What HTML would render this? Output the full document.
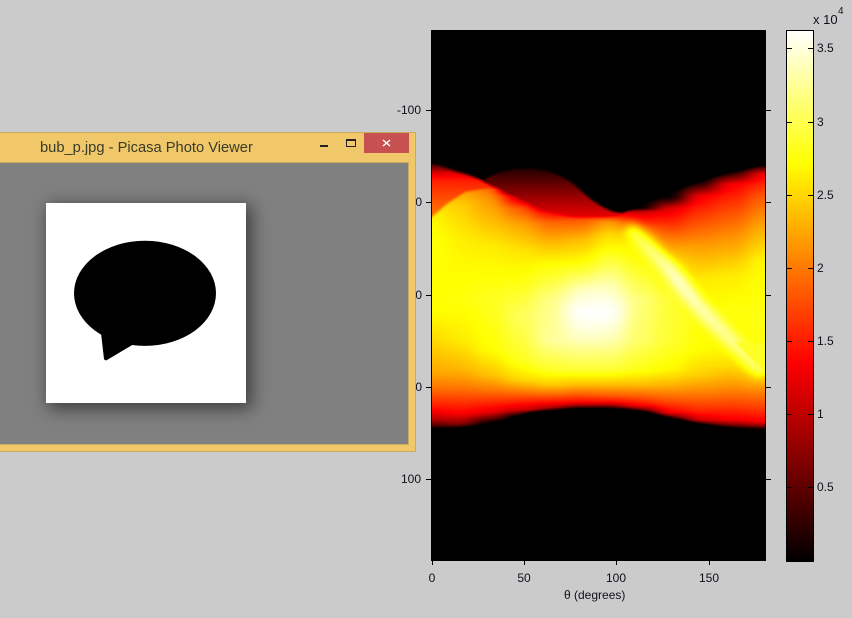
<!DOCTYPE html>
<html><head><meta charset="utf-8">
<style>
html,body{margin:0;padding:0;background:#cbcbcb;width:852px;height:618px;overflow:hidden}
body{position:relative;font-family:"Liberation Sans",sans-serif;font-size:12px;color:#10101c}
.t{position:absolute;line-height:14px;white-space:nowrap}
.r{text-align:right;width:50px}
.c{text-align:center;width:60px}
.win{position:absolute;left:-4px;top:132px;width:419px;height:318px;background:#f0c869;border:1px solid #c9ab5e;border-left:none;box-sizing:content-box}
.client{position:absolute;left:0;top:29px;width:412px;height:281px;background:#808080;border:1px solid #c9ab5e;border-left:none;overflow:hidden}
.photo{position:absolute;left:50px;top:40px;width:200px;height:200px;background:#fff;box-shadow:4px 4px 16px 2px rgba(0,0,0,.5)}
.title{position:absolute;left:44px;top:5px;font-size:14.7px;line-height:20px;color:#3a3a2a;white-space:nowrap}
.close{position:absolute;left:368px;top:0;width:45px;height:20px;background:#c75050}
</style></head><body>
<svg width="852" height="618" viewBox="0 0 852 618" style="position:absolute;left:0;top:0">
<defs>
<clipPath id="p"><rect x="432" y="30" width="333" height="531"/></clipPath>
<filter id="hotmap" filterUnits="userSpaceOnUse" x="415" y="20" width="370" height="550" color-interpolation-filters="sRGB">
  <feComponentTransfer>
    <feFuncR type="table" tableValues="0 .333 .667 1 1 1 1 1 1"/>
    <feFuncG type="table" tableValues="0 0 0 0 .333 .667 1 1 1"/>
    <feFuncB type="table" tableValues="0 0 0 0 0 0 0 .5 1"/>
  </feComponentTransfer>
</filter>
<filter id="hb" filterUnits="userSpaceOnUse" x="380" y="20" width="440" height="550" color-interpolation-filters="sRGB"><feGaussianBlur stdDeviation="9 0"/></filter>
<filter id="b1" filterUnits="userSpaceOnUse" x="380" y="10" width="440" height="570" color-interpolation-filters="sRGB"><feGaussianBlur stdDeviation="1"/></filter>
<filter id="b3" filterUnits="userSpaceOnUse" x="380" y="100" width="440" height="380" color-interpolation-filters="sRGB"><feGaussianBlur stdDeviation="5"/></filter>
<filter id="b12" filterUnits="userSpaceOnUse" x="380" y="100" width="440" height="380" color-interpolation-filters="sRGB"><feGaussianBlur stdDeviation="12"/></filter>

<linearGradient id="c432" gradientUnits="userSpaceOnUse" x1="0" y1="0" x2="0" y2="1000"><stop offset=".160" stop-color="rgb(0%,0%,0%)"/><stop offset=".165" stop-color="rgb(15%,15%,15%)"/><stop offset=".172" stop-color="rgb(35%,35%,35%)"/><stop offset=".180" stop-color="rgb(42%,42%,42%)"/><stop offset=".195" stop-color="rgb(60%,60%,60%)"/><stop offset=".205" stop-color="rgb(70%,70%,70%)"/><stop offset=".218" stop-color="rgb(74%,74%,74%)"/><stop offset=".240" stop-color="rgb(76%,76%,76%)"/><stop offset=".313" stop-color="rgb(75%,75%,75%)"/><stop offset=".347" stop-color="rgb(68%,68%,68%)"/><stop offset=".373" stop-color="rgb(62%,62%,62%)"/><stop offset=".387" stop-color="rgb(55%,55%,55%)"/><stop offset=".400" stop-color="rgb(46%,46%,46%)"/><stop offset=".410" stop-color="rgb(38%,38%,38%)"/><stop offset=".420" stop-color="rgb(25%,25%,25%)"/><stop offset=".430" stop-color="rgb(0%,0%,0%)"/></linearGradient>

<linearGradient id="c460" gradientUnits="userSpaceOnUse" x1="0" y1="0" x2="0" y2="1000"><stop offset=".168" stop-color="rgb(0%,0%,0%)"/><stop offset=".172" stop-color="rgb(10%,10%,10%)"/><stop offset=".178" stop-color="rgb(30%,30%,30%)"/><stop offset=".185" stop-color="rgb(45%,45%,45%)"/><stop offset=".192" stop-color="rgb(62%,62%,62%)"/><stop offset=".205" stop-color="rgb(68%,68%,68%)"/><stop offset=".240" stop-color="rgb(73%,73%,73%)"/><stop offset=".300" stop-color="rgb(76%,76%,76%)"/><stop offset=".340" stop-color="rgb(72%,72%,72%)"/><stop offset=".370" stop-color="rgb(64%,64%,64%)"/><stop offset=".388" stop-color="rgb(55%,55%,55%)"/><stop offset=".402" stop-color="rgb(45%,45%,45%)"/><stop offset=".414" stop-color="rgb(37%,37%,37%)"/><stop offset=".424" stop-color="rgb(20%,20%,20%)"/><stop offset=".430" stop-color="rgb(0%,0%,0%)"/></linearGradient>

<linearGradient id="c490" gradientUnits="userSpaceOnUse" x1="0" y1="0" x2="0" y2="1000"><stop offset=".180" stop-color="rgb(0%,0%,0%)"/><stop offset=".185" stop-color="rgb(40%,40%,40%)"/><stop offset=".190" stop-color="rgb(55%,55%,55%)"/><stop offset=".200" stop-color="rgb(60%,60%,60%)"/><stop offset=".220" stop-color="rgb(65%,65%,65%)"/><stop offset=".245" stop-color="rgb(72%,72%,72%)"/><stop offset=".300" stop-color="rgb(78%,78%,78%)"/><stop offset=".350" stop-color="rgb(75%,75%,75%)"/><stop offset=".375" stop-color="rgb(66%,66%,66%)"/><stop offset=".390" stop-color="rgb(55%,55%,55%)"/><stop offset=".403" stop-color="rgb(43%,43%,43%)"/><stop offset=".413" stop-color="rgb(33%,33%,33%)"/><stop offset=".420" stop-color="rgb(10%,10%,10%)"/><stop offset=".424" stop-color="rgb(0%,0%,0%)"/></linearGradient>

<linearGradient id="c520" gradientUnits="userSpaceOnUse" x1="0" y1="0" x2="0" y2="1000"><stop offset=".192" stop-color="rgb(0%,0%,0%)"/><stop offset=".196" stop-color="rgb(28%,28%,28%)"/><stop offset=".202" stop-color="rgb(38%,38%,38%)"/><stop offset=".208" stop-color="rgb(50%,50%,50%)"/><stop offset=".225" stop-color="rgb(62%,62%,62%)"/><stop offset=".250" stop-color="rgb(71%,71%,71%)"/><stop offset=".280" stop-color="rgb(76%,76%,76%)"/><stop offset=".315" stop-color="rgb(84%,84%,84%)"/><stop offset=".360" stop-color="rgb(78%,78%,78%)"/><stop offset=".380" stop-color="rgb(69%,69%,69%)"/><stop offset=".392" stop-color="rgb(55%,55%,55%)"/><stop offset=".402" stop-color="rgb(42%,42%,42%)"/><stop offset=".410" stop-color="rgb(30%,30%,30%)"/><stop offset=".416" stop-color="rgb(0%,0%,0%)"/></linearGradient>

<linearGradient id="c550" gradientUnits="userSpaceOnUse" x1="0" y1="0" x2="0" y2="1000"><stop offset=".200" stop-color="rgb(0%,0%,0%)"/><stop offset=".205" stop-color="rgb(15%,15%,15%)"/><stop offset=".213" stop-color="rgb(38%,38%,38%)"/><stop offset=".222" stop-color="rgb(52%,52%,52%)"/><stop offset=".245" stop-color="rgb(66%,66%,66%)"/><stop offset=".262" stop-color="rgb(74%,74%,74%)"/><stop offset=".300" stop-color="rgb(88%,88%,88%)"/><stop offset=".340" stop-color="rgb(90%,90%,90%)"/><stop offset=".370" stop-color="rgb(79%,79%,79%)"/><stop offset=".385" stop-color="rgb(67%,67%,67%)"/><stop offset=".395" stop-color="rgb(52%,52%,52%)"/><stop offset=".403" stop-color="rgb(38%,38%,38%)"/><stop offset=".410" stop-color="rgb(20%,20%,20%)"/><stop offset=".412" stop-color="rgb(0%,0%,0%)"/></linearGradient>

<linearGradient id="c580" gradientUnits="userSpaceOnUse" x1="0" y1="0" x2="0" y2="1000"><stop offset=".208" stop-color="rgb(0%,0%,0%)"/><stop offset=".214" stop-color="rgb(36%,36%,36%)"/><stop offset=".220" stop-color="rgb(50%,50%,50%)"/><stop offset=".240" stop-color="rgb(65%,65%,65%)"/><stop offset=".262" stop-color="rgb(75%,75%,75%)"/><stop offset=".290" stop-color="rgb(92%,92%,92%)"/><stop offset=".312" stop-color="rgb(100%,100%,100%)"/><stop offset=".340" stop-color="rgb(93%,93%,93%)"/><stop offset=".370" stop-color="rgb(80%,80%,80%)"/><stop offset=".385" stop-color="rgb(65%,65%,65%)"/><stop offset=".395" stop-color="rgb(50%,50%,50%)"/><stop offset=".402" stop-color="rgb(38%,38%,38%)"/><stop offset=".408" stop-color="rgb(10%,10%,10%)"/><stop offset=".409" stop-color="rgb(0%,0%,0%)"/></linearGradient>

<linearGradient id="c610" gradientUnits="userSpaceOnUse" x1="0" y1="0" x2="0" y2="1000"><stop offset=".208" stop-color="rgb(0%,0%,0%)"/><stop offset=".214" stop-color="rgb(38%,38%,38%)"/><stop offset=".222" stop-color="rgb(60%,60%,60%)"/><stop offset=".235" stop-color="rgb(70%,70%,70%)"/><stop offset=".250" stop-color="rgb(76%,76%,76%)"/><stop offset=".280" stop-color="rgb(90%,90%,90%)"/><stop offset=".312" stop-color="rgb(100%,100%,100%)"/><stop offset=".340" stop-color="rgb(92%,92%,92%)"/><stop offset=".370" stop-color="rgb(80%,80%,80%)"/><stop offset=".385" stop-color="rgb(65%,65%,65%)"/><stop offset=".396" stop-color="rgb(50%,50%,50%)"/><stop offset=".402" stop-color="rgb(38%,38%,38%)"/><stop offset=".408" stop-color="rgb(10%,10%,10%)"/><stop offset=".410" stop-color="rgb(0%,0%,0%)"/></linearGradient>

<linearGradient id="c640" gradientUnits="userSpaceOnUse" x1="0" y1="0" x2="0" y2="1000"><stop offset=".208" stop-color="rgb(0%,0%,0%)"/><stop offset=".212" stop-color="rgb(30%,30%,30%)"/><stop offset=".222" stop-color="rgb(44%,44%,44%)"/><stop offset=".232" stop-color="rgb(60%,60%,60%)"/><stop offset=".245" stop-color="rgb(72%,72%,72%)"/><stop offset=".265" stop-color="rgb(77%,77%,77%)"/><stop offset=".300" stop-color="rgb(87%,87%,87%)"/><stop offset=".340" stop-color="rgb(85%,85%,85%)"/><stop offset=".370" stop-color="rgb(77%,77%,77%)"/><stop offset=".385" stop-color="rgb(65%,65%,65%)"/><stop offset=".397" stop-color="rgb(50%,50%,50%)"/><stop offset=".405" stop-color="rgb(38%,38%,38%)"/><stop offset=".411" stop-color="rgb(10%,10%,10%)"/><stop offset=".413" stop-color="rgb(0%,0%,0%)"/></linearGradient>

<linearGradient id="c670" gradientUnits="userSpaceOnUse" x1="0" y1="0" x2="0" y2="1000"><stop offset=".197" stop-color="rgb(0%,0%,0%)"/><stop offset=".201" stop-color="rgb(10%,10%,10%)"/><stop offset=".208" stop-color="rgb(33%,33%,33%)"/><stop offset=".225" stop-color="rgb(45%,45%,45%)"/><stop offset=".245" stop-color="rgb(60%,60%,60%)"/><stop offset=".265" stop-color="rgb(72%,72%,72%)"/><stop offset=".285" stop-color="rgb(77%,77%,77%)"/><stop offset=".300" stop-color="rgb(80%,80%,80%)"/><stop offset=".340" stop-color="rgb(80%,80%,80%)"/><stop offset=".370" stop-color="rgb(74%,74%,74%)"/><stop offset=".385" stop-color="rgb(64%,64%,64%)"/><stop offset=".400" stop-color="rgb(50%,50%,50%)"/><stop offset=".412" stop-color="rgb(37%,37%,37%)"/><stop offset=".418" stop-color="rgb(10%,10%,10%)"/><stop offset=".420" stop-color="rgb(0%,0%,0%)"/></linearGradient>

<linearGradient id="c700" gradientUnits="userSpaceOnUse" x1="0" y1="0" x2="0" y2="1000"><stop offset=".181" stop-color="rgb(0%,0%,0%)"/><stop offset=".186" stop-color="rgb(10%,10%,10%)"/><stop offset=".196" stop-color="rgb(36%,36%,36%)"/><stop offset=".215" stop-color="rgb(46%,46%,46%)"/><stop offset=".245" stop-color="rgb(60%,60%,60%)"/><stop offset=".280" stop-color="rgb(72%,72%,72%)"/><stop offset=".320" stop-color="rgb(76%,76%,76%)"/><stop offset=".350" stop-color="rgb(75%,75%,75%)"/><stop offset=".375" stop-color="rgb(68%,68%,68%)"/><stop offset=".395" stop-color="rgb(55%,55%,55%)"/><stop offset=".412" stop-color="rgb(42%,42%,42%)"/><stop offset=".420" stop-color="rgb(30%,30%,30%)"/><stop offset=".425" stop-color="rgb(5%,5%,5%)"/><stop offset=".427" stop-color="rgb(0%,0%,0%)"/></linearGradient>

<linearGradient id="c730" gradientUnits="userSpaceOnUse" x1="0" y1="0" x2="0" y2="1000"><stop offset=".170" stop-color="rgb(0%,0%,0%)"/><stop offset=".175" stop-color="rgb(10%,10%,10%)"/><stop offset=".184" stop-color="rgb(36%,36%,36%)"/><stop offset=".205" stop-color="rgb(46%,46%,46%)"/><stop offset=".235" stop-color="rgb(58%,58%,58%)"/><stop offset=".275" stop-color="rgb(72%,72%,72%)"/><stop offset=".310" stop-color="rgb(76%,76%,76%)"/><stop offset=".345" stop-color="rgb(75%,75%,75%)"/><stop offset=".365" stop-color="rgb(70%,70%,70%)"/><stop offset=".385" stop-color="rgb(60%,60%,60%)"/><stop offset=".405" stop-color="rgb(47%,47%,47%)"/><stop offset=".420" stop-color="rgb(36%,36%,36%)"/><stop offset=".427" stop-color="rgb(10%,10%,10%)"/><stop offset=".430" stop-color="rgb(0%,0%,0%)"/></linearGradient>

<linearGradient id="c765" gradientUnits="userSpaceOnUse" x1="0" y1="0" x2="0" y2="1000"><stop offset=".163" stop-color="rgb(0%,0%,0%)"/><stop offset=".167" stop-color="rgb(10%,10%,10%)"/><stop offset=".174" stop-color="rgb(36%,36%,36%)"/><stop offset=".195" stop-color="rgb(50%,50%,50%)"/><stop offset=".225" stop-color="rgb(62%,62%,62%)"/><stop offset=".262" stop-color="rgb(74%,74%,74%)"/><stop offset=".320" stop-color="rgb(77%,77%,77%)"/><stop offset=".368" stop-color="rgb(76%,76%,76%)"/><stop offset=".380" stop-color="rgb(66%,66%,66%)"/><stop offset=".395" stop-color="rgb(55%,55%,55%)"/><stop offset=".410" stop-color="rgb(45%,45%,45%)"/><stop offset=".422" stop-color="rgb(36%,36%,36%)"/><stop offset=".428" stop-color="rgb(10%,10%,10%)"/><stop offset=".431" stop-color="rgb(0%,0%,0%)"/></linearGradient>

<linearGradient id="ridge" gradientUnits="userSpaceOnUse" x1="0" y1="165" x2="0" y2="217"><stop offset="0" stop-color="rgb(10%,10%,10%)"/><stop offset=".15" stop-color="rgb(33%,33%,33%)"/><stop offset=".3" stop-color="rgb(42%,42%,42%)"/><stop offset=".7" stop-color="rgb(50%,50%,50%)"/><stop offset="1" stop-color="rgb(56%,56%,56%)"/></linearGradient>
<linearGradient id="hump" gradientUnits="userSpaceOnUse" x1="0" y1="168" x2="0" y2="214"><stop offset="0" stop-color="rgb(5%,5%,5%)"/><stop offset="1" stop-color="rgb(33%,33%,33%)"/></linearGradient>
<linearGradient id="st" gradientUnits="userSpaceOnUse" x1="625" y1="228" x2="770" y2="378"><stop offset="0" stop-color="rgb(80%,80%,80%)"/><stop offset=".35" stop-color="rgb(97%,97%,97%)"/><stop offset=".65" stop-color="rgb(92%,92%,92%)"/><stop offset="1" stop-color="rgb(84%,84%,84%)"/></linearGradient>
<linearGradient id="hot" x1="0" y1="1" x2="0" y2="0"><stop offset="0" stop-color="#000"/><stop offset=".375" stop-color="#f00"/><stop offset=".75" stop-color="#ff0"/><stop offset="1" stop-color="#fff"/></linearGradient>
</defs>
<rect x="432" y="30" width="333" height="531" fill="#000"/>
<g clip-path="url(#p)"><g filter="url(#hotmap)">
<rect x="415" y="20" width="370" height="550" fill="#000"/>
<g filter="url(#hb)">
<rect x="400" y="20" width="46" height="550" fill="url(#c432)"/>
<rect x="446" y="20" width="29" height="550" fill="url(#c460)"/>
<rect x="475" y="20" width="30" height="550" fill="url(#c490)"/>
<rect x="505" y="20" width="30" height="550" fill="url(#c520)"/>
<rect x="535" y="20" width="30" height="550" fill="url(#c550)"/>
<rect x="565" y="20" width="30" height="550" fill="url(#c580)"/>
<rect x="595" y="20" width="30" height="550" fill="url(#c610)"/>
<rect x="625" y="20" width="30" height="550" fill="url(#c640)"/>
<rect x="655" y="20" width="30" height="550" fill="url(#c670)"/>
<rect x="685" y="20" width="30" height="550" fill="url(#c700)"/>
<rect x="715" y="20" width="33" height="550" fill="url(#c730)"/>
<rect x="748" y="20" width="52" height="550" fill="url(#c765)"/>
</g>
<ellipse cx="595" cy="312" rx="22" ry="22" fill="#fff" fill-opacity=".6" filter="url(#b12)"/>
<path filter="url(#b3)" fill="none" stroke="url(#st)" stroke-width="14" d="M628,228L668,268L700,308L735,344L764,372"/>
<path filter="url(#b1)" fill="rgb(79%,79%,79%)" d="M735,342L768,375L785,372L785,345Z"/>
<path filter="url(#b1)" fill="url(#ridge)" d="M415,160L495,184L495,187L490,187L465,192L448,203L432,217L415,232Z"/>
<path filter="url(#b1)" fill="#000" d="M415,20L415,162C450,165 470,174 490,183C520,195 545,212 578,214L622,213C660,200 705,172 785,163L785,20Z"/>
<path filter="url(#b1)" fill="#000" d="M415,570L415,427C460,430 490,424 530,412C570,406 620,406 650,412C700,425 740,430 785,429L785,570Z"/>
<path filter="url(#b1)" fill="url(#hump)" d="M482,181C510,163 552,164 578,188C594,203 606,211 624,215C610,217 595,217 578,217C545,215 520,197 490,185Z"/>
</g></g>
<path d="M431.5,30V560.5H765.5V30" fill="none" stroke="#000" stroke-width="1"/>
<path stroke="#000" stroke-width="1" fill="none" d="M426,110.5h6M426,202.5h6M426,295.5h6M426,387.5h6M426,479.5h6M765,110.5h6M765,202.5h6M765,295.5h6M765,387.5h6M765,479.5h6M432.5,561v4M524.5,561v4M616.5,561v4M709.5,561v4"/>
<rect x="786.5" y="30.5" width="27" height="531" fill="url(#hot)" stroke="#000" stroke-width="1"/>
<path stroke="#000" stroke-width="1" fill="none" d="M787,48.5h5M808,48.5h5M787,122.5h5M808,122.5h5M787,195.5h5M808,195.5h5M787,268.5h5M808,268.5h5M787,341.5h5M808,341.5h5M787,414.5h5M808,414.5h5M787,487.5h5M808,487.5h5"/>
</svg>

<div class="t r" style="left:371px;top:103px">-100</div>
<div class="t r" style="left:372px;top:195px">-50</div>
<div class="t r" style="left:372px;top:288px">0</div>
<div class="t r" style="left:372px;top:380px">50</div>
<div class="t r" style="left:371px;top:472px">100</div>
<div class="t c" style="left:402px;top:571px">0</div>
<div class="t c" style="left:494px;top:571px">50</div>
<div class="t c" style="left:586px;top:571px">100</div>
<div class="t c" style="left:679px;top:571px">150</div>
<div class="t" style="left:564px;top:588px;font-family:'Liberation Sans','DejaVu Sans',sans-serif">θ (degrees)</div>
<div class="t" style="left:813px;top:13px;font-size:13px">x 10</div>
<div class="t" style="left:838px;top:5px;font-size:10px">4</div>
<div class="t" style="left:817px;top:41px">3.5</div>
<div class="t" style="left:817px;top:115px">3</div>
<div class="t" style="left:817px;top:188px">2.5</div>
<div class="t" style="left:817px;top:261px">2</div>
<div class="t" style="left:817px;top:334px">1.5</div>
<div class="t" style="left:817px;top:407px">1</div>
<div class="t" style="left:817px;top:480px">0.5</div>

<div class="win">
  <div class="title">bub_p.jpg - Picasa Photo Viewer</div>
  <svg width="100" height="22" style="position:absolute;left:318px;top:0" viewBox="0 0 100 22">
    <rect x="6" y="12" width="8" height="2" fill="#222"/>
    <rect x="32.5" y="6.5" width="9" height="7" fill="none" stroke="#222" stroke-width="1"/>
    <rect x="32" y="6" width="10" height="2" fill="#222"/>
  </svg>
  <div class="close"><svg width="45" height="20" viewBox="0 0 45 20"><path d="M19,7L26,13M26,7L19,13" stroke="#fff" stroke-width="1.4" fill="none"/></svg></div>
  <div class="client">
    <div class="photo">
      <svg width="200" height="200" viewBox="0 0 200 200" style="position:absolute;left:0;top:0">
        <ellipse cx="99" cy="90.3" rx="71" ry="52.6" fill="#000"/>
        <path d="M55,130L58,156Q59,158 61,157L88,141L70,125Z" fill="#000"/>
      </svg>
    </div>
  </div>
</div>
</body></html>
